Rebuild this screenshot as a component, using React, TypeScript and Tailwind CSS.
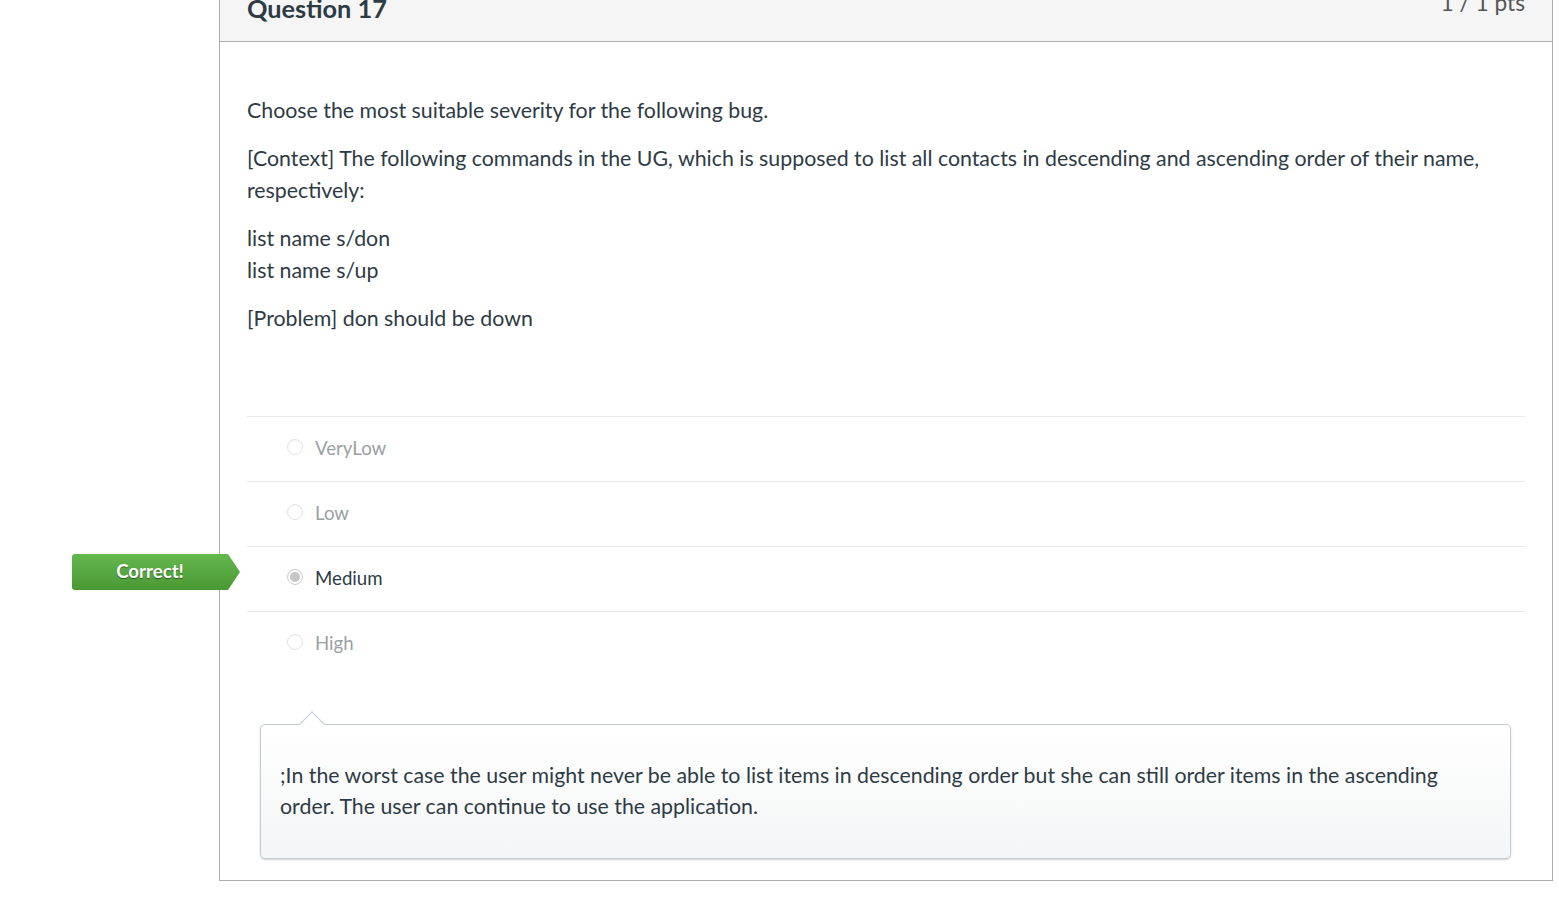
import React from 'react';

const answers = [
  { label: 'VeryLow', selected: false },
  { label: 'Low', selected: false },
  { label: 'Medium', selected: true },
  { label: 'High', selected: false },
];

const Radio = ({ checked }: { checked: boolean }) =>
  checked ? (
    <span className="flex w-[16px] h-[16px] rounded-full border border-[#cfcfcf] bg-white items-center justify-center shrink-0 shadow-[inset_0_1px_1px_rgba(0,0,0,0.06)]">
      <span className="block w-[10px] h-[10px] rounded-full bg-[#c6c6c6]" />
    </span>
  ) : (
    <span className="block w-[16px] h-[16px] rounded-full border border-[#e2e2e2] bg-white shrink-0 shadow-[inset_0_1px_1px_rgba(0,0,0,0.04)]" />
  );

export default function App() {
  return (
    <div className="min-h-screen bg-white font-['Lato','Noto_Sans',sans-serif] text-[#2d3b45]">
      <div className="ml-[219px] w-[1334px] border-x border-b border-[#adadad]">
        {/* Header */}
        <div className="h-[42px] bg-[#f5f5f5] border-b border-[#adadad] px-[27px] flex justify-between items-start">
          <h2 className="text-[25.33px] leading-[30px] font-bold -mt-[7px]">Question 17</h2>
          <div className="text-[22.67px] leading-[28px] text-[#555555] -mt-[11px]">1 / 1 pts</div>
        </div>

        {/* Body */}
        <div className="px-[27px] pt-[52px] pb-[21px]">
          <div className="text-[21.33px] leading-[32px]">
            <p className="mb-[16px]">Choose the most suitable severity for the following bug.</p>
            <p className="mb-[16px]">
              [Context] The following commands in the UG, which is supposed to list all contacts in descending and ascending order of their name, respectively:
            </p>
            <p className="mb-[16px]">
              list name s/don
              <br />
              list name s/up
            </p>
            <p>[Problem] don should be down</p>
          </div>

          {/* Answers */}
          <div className="mt-[82px]">
            {answers.map((a) => (
              <div key={a.label} className="relative h-[65px] border-t border-[#e8e8e8] pl-[40px] flex items-center gap-[12px]">
                {a.selected && (
                  <div className="absolute left-[-175px] top-[7px] w-[168px] h-[36px] rounded-l-[3px] bg-gradient-to-b from-[#64b74d] to-[#4a9835] flex items-center pr-[12px] justify-center [clip-path:polygon(0_0,calc(100%-12px)_0,100%_50%,calc(100%-12px)_100%,0_100%)]">
                    <span className="text-white font-bold text-[18.67px] leading-none [text-shadow:0_1px_1px_rgba(0,0,0,0.45)] -mt-[2px]">
                      Correct!
                    </span>
                  </div>
                )}
                <span className="flex -mt-[4px]">
                  <Radio checked={a.selected} />
                </span>
                <span className={`text-[18.67px] -mt-[2px] ${a.selected ? 'text-[#2d3b45]' : 'text-[#9b9fa3]'}`}>{a.label}</span>
              </div>
            ))}
          </div>

          {/* Feedback */}
          <div className="relative mt-[48px] ml-[13px] mr-[14px] border border-[#c4cbd2] rounded-[5px] bg-gradient-to-b from-white to-[#f4f5f6] shadow-[0_1px_2px_rgba(0,0,0,0.18)] px-[19px] pt-[35px] pb-[36px]">
            <div className="absolute top-[-10px] left-[42px] w-[18px] h-[18px] rotate-45 bg-white border-l border-t border-[#c4cbd2]" />
            <p className="relative text-[21.33px] leading-[31px]">
              ;In the worst case the user might never be able to list items in descending order but she can still order items in the ascending order. The user can continue to use the application.
            </p>
          </div>
        </div>
      </div>
    </div>
  );
}
